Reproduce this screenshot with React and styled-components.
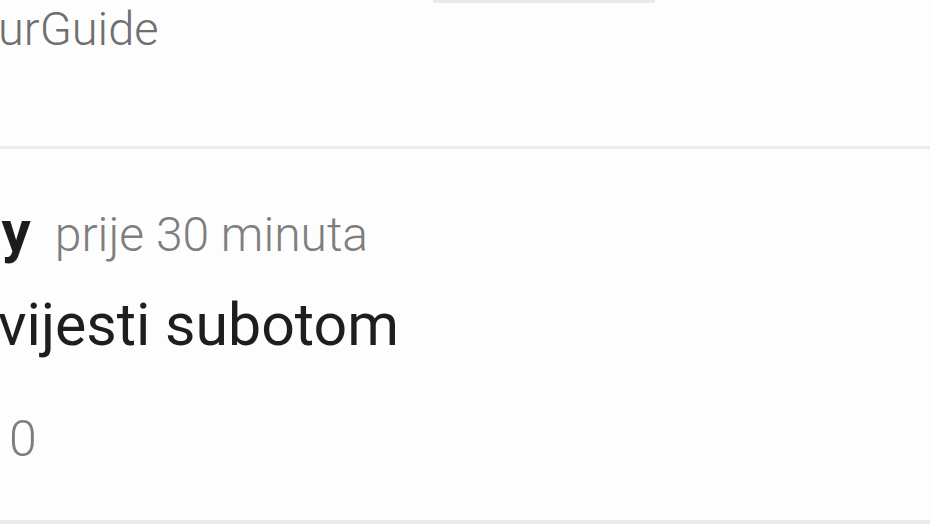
import React from "react";
import styled, { createGlobalStyle } from "styled-components";

const Global = createGlobalStyle`
  html, body { margin: 0; padding: 0; background: #fdfdfd; }
  body { font-family: Roboto, "Noto Sans", "Liberation Sans", sans-serif; overflow: hidden; }
`;

const Screen = styled.div`
  width: 930px;
  height: 525px;
  overflow: hidden;
  background: #fdfdfd;
  display: flex;
  flex-direction: column;
`;

const Header = styled.header`
  height: 146px;
  display: flex;
  flex-direction: column;
  border-bottom: 3px solid #ebebeb;
`;

const TabIndicator = styled.div`
  margin-left: 433px;
  width: 222px;
  height: 3px;
  background: #e9e9e9;
  border-radius: 0 0 2px 2px;
`;

const Brand = styled.div`
  margin: 2px 0 0 -2px;
  font-size: 47px;
  line-height: 47px;
  font-weight: 300;
  color: #6f6f6f;
  white-space: nowrap;
`;

const Post = styled.article`
  display: flex;
  flex-direction: column;
  padding: 59px 0 56px;
  border-bottom: 4px solid #ebebeb;
`;

const Meta = styled.div`
  display: flex;
  align-items: baseline;
  gap: 24px;
  height: 47px;
  line-height: 47px;
  white-space: nowrap;
`;

const Author = styled.span`
  margin-left: -29px;
  font-size: 58px;
  font-weight: 700;
  color: #1c1c1c;
`;

const Time = styled.span`
  font-size: 48px;
  font-weight: 300;
  color: #7e7e7e;
`;

const Title = styled.h2`
  margin: 42px 0 0 -2px;
  font-size: 59px;
  line-height: 56px;
  font-weight: 400;
  color: #1e1e1e;
  white-space: nowrap;
`;

const Stats = styled.div`
  margin: 61px 0 0 9px;
  font-size: 50px;
  line-height: 50px;
  color: #7e7e7e;
  font-weight: 300;
`;

export default function App() {
  return (
    <>
      <Global />
      <Screen>
        <Header>
          <TabIndicator />
          <Brand>urGuide</Brand>
        </Header>
        <Post>
          <Meta>
            <Author>ay</Author>
            <Time>prije 30 minuta</Time>
          </Meta>
          <Title>vijesti subotom</Title>
          <Stats>0</Stats>
        </Post>
      </Screen>
    </>
  );
}
